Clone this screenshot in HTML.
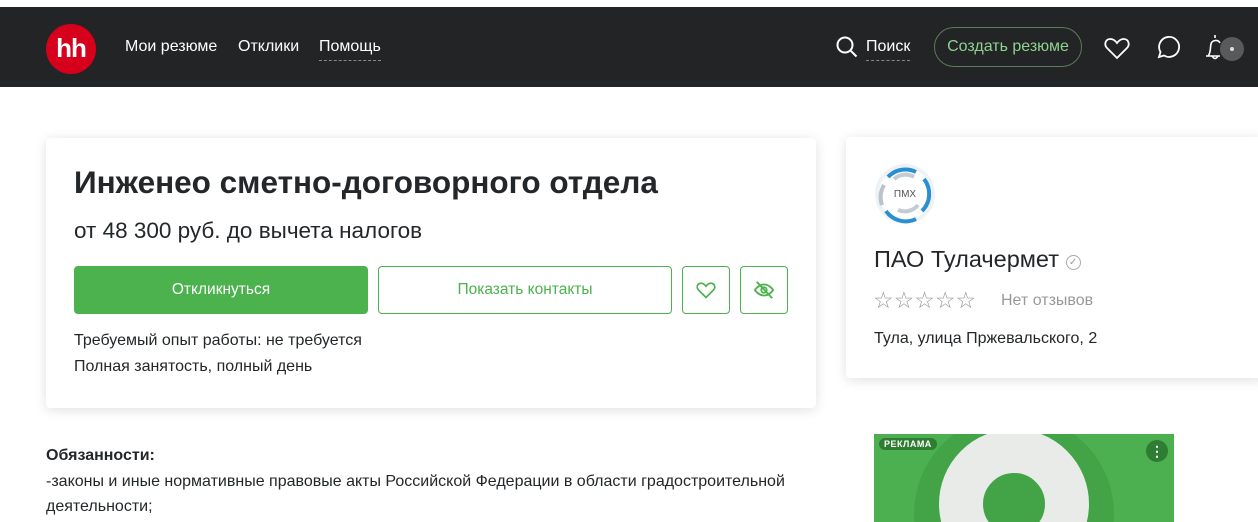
<!DOCTYPE html>
<html><head><meta charset="utf-8"><style>
*{margin:0;padding:0;box-sizing:border-box}
body{width:1258px;height:522px;overflow:hidden;background:#fff;font-family:"Liberation Sans",Arial,sans-serif;color:#232729;position:relative}
.hdr{position:absolute;left:0;top:7px;width:1258px;height:80px;background:#232425}
.abs{position:absolute}
.nav{color:#fff;font-size:16px}
.card{position:absolute;background:#fff;box-shadow:0 2px 12px rgba(0,0,0,.12);border-radius:4px}
.btn{position:absolute;border:1px solid #4bb24e;border-radius:4px;display:flex;align-items:center;justify-content:center;font-size:15.5px;color:#4bb24e;background:#fff}
.t15{font-size:16px;line-height:26px;white-space:nowrap}
</style></head><body>
<div class="hdr">
 <div class="abs" style="left:46px;top:17px;width:50px;height:50px;border-radius:50%;background:#d6001c;color:#fff;font-weight:bold;font-size:26px;text-align:center;line-height:48px;letter-spacing:-1px">hh</div>
 <div class="abs nav" style="left:125px;top:31px">Мои резюме</div>
 <div class="abs nav" style="left:238px;top:31px">Отклики</div>
 <div class="abs nav" style="left:319px;top:31px;padding-bottom:4px;border-bottom:1px dashed #888">Помощь</div>
 <svg class="abs" style="left:835px;top:28px" width="24" height="24" viewBox="0 0 24 24" fill="none" stroke="#fff" stroke-width="2"><circle cx="10" cy="10" r="7.5"/><path d="M15.5 15.5l6 6"/></svg>
 <div class="abs nav" style="left:866px;top:31px;padding-bottom:4px;border-bottom:1px dashed #888">Поиск</div>
 <div class="abs" style="left:934px;top:20px;width:148px;height:40px;border:1px solid #5c7a5e;border-radius:20px;color:#8fd28f;font-size:16px;text-align:center;line-height:38px">Создать резюме</div>
 <svg class="abs" style="left:1104px;top:29px" width="26" height="24" viewBox="0 0 26 24" fill="none" stroke="#fff" stroke-width="1.8"><path d="M13 22L3 12C0 9 1 3 6.5 3 9.5 3 11.5 5 13 7 14.5 5 16.5 3 19.5 3 25 3 26 9 23 12Z"/></svg>
 <svg class="abs" style="left:1154px;top:27px" width="26" height="26" viewBox="0 0 26 26" fill="none" stroke="#fff" stroke-width="1.8"><path d="M5 23l1.5-5A10 10 0 1 1 10 21.5Z"/></svg>
 <svg class="abs" style="left:1204px;top:25px" width="22" height="32" viewBox="0 0 22 32" fill="none" stroke="#fff" stroke-width="1.6"><path d="M11 3v3M4 24c3-3 2-8 3-12s7-5 9-1M2 24h14M8 24q3 5 6 0"/></svg>
 <div class="abs" style="left:1220px;top:30px;width:24px;height:24px;border-radius:50%;background:#5a5a5a"><div class="abs" style="left:10px;top:10px;width:4px;height:4px;border-radius:50%;background:#ddd"></div></div>
</div>

<div class="card" style="left:46px;top:138px;width:770px;height:270px">
 <div class="abs" style="left:28px;top:26px;font-size:31.5px;font-weight:bold;white-space:nowrap">Инженео сметно-договорного отдела</div>
 <div class="abs" style="left:28px;top:80px;font-size:22.5px;white-space:nowrap">от 48 300 руб. до вычета налогов</div>
 <div class="btn" style="left:28px;top:128px;width:294px;height:48px;background:#4bb24e;color:#fff">Откликнуться</div>
 <div class="btn" style="left:332px;top:128px;width:294px;height:48px">Показать контакты</div>
 <div class="btn" style="left:636px;top:128px;width:48px;height:48px"><svg width="20" height="18" viewBox="0 0 26 24" fill="none" stroke="#4bb24e" stroke-width="2.2"><path d="M13 22L3 12C0 9 1 3 6.5 3 9.5 3 11.5 5 13 7 14.5 5 16.5 3 19.5 3 25 3 26 9 23 12Z"/></svg></div>
 <div class="btn" style="left:694px;top:128px;width:48px;height:48px"><svg width="22" height="22" viewBox="0 0 24 24" fill="none" stroke="#4bb24e" stroke-width="2"><path d="M2 12s4-6 10-6 10 6 10 6-4 6-10 6S2 12 2 12Z"/><circle cx="12" cy="12" r="3"/><path d="M4 3l17 18"/></svg></div>
 <div class="abs t15" style="left:28px;top:190px">Требуемый опыт работы: не требуется</div>
 <div class="abs t15" style="left:28px;top:216px">Полная занятость, полный день</div>
</div>

<div class="abs t15" style="left:46px;top:443px;font-weight:bold">Обязанности:</div>
<div class="abs t15" style="left:46px;top:469px">-законы и иные нормативные правовые акты Российской Федерации в области градостроительной</div>
<div class="abs t15" style="left:46px;top:494px">деятельности;</div>

<div class="card" style="left:846px;top:137px;width:420px;height:241px">
 <svg class="abs" style="left:28px;top:26px" width="62" height="62" viewBox="0 0 62 62" fill="none" stroke-width="4"><circle cx="31" cy="31" r="28" stroke="#eef2f5"/><path d="M14 14A24 24 0 0 1 42 9" stroke="#2a8fd1"/><path d="M50 16A24 24 0 0 1 48 48" stroke="#2a8fd1"/><path d="M42 56A24 24 0 0 1 12 48" stroke="#2a8fd1"/><path d="M8 42A24 24 0 0 1 10 22" stroke="#b9c3c9"/><path d="M20 16A17 17 0 0 1 40 14" stroke="#c4ccd1"/><path d="M44 42A17 17 0 0 1 24 47" stroke="#c4ccd1"/><text x="31" y="34" font-size="10" fill="#555" stroke="none" text-anchor="middle" font-family="Liberation Sans">ПМХ</text></svg>
 <div class="abs" style="left:28px;top:109px;font-size:23.5px;white-space:nowrap">ПАО Тулачермет <span style="display:inline-block;width:15px;height:15px;border:1px solid #aaa;border-radius:50%;font-size:10px;color:#999;text-align:center;line-height:13px;vertical-align:2px">✓</span></div>
 <div class="abs" style="left:27px;top:150px;font-size:23px;color:#999;letter-spacing:0px">☆☆☆☆☆</div>
 <div class="abs" style="left:155px;top:155px;font-size:16px;color:#999">Нет отзывов</div>
 <div class="abs t15" style="left:28px;top:189px">Тула, улица Пржевальского, 2</div>
</div>

<div class="abs" style="left:874px;top:434px;width:300px;height:88px;background:#4caf50;overflow:hidden">
 <div class="abs" style="left:40px;top:-20px;width:200px;height:200px;border-radius:50%;background:#43a447"></div>
 <div class="abs" style="left:65px;top:-5px;width:150px;height:150px;border-radius:50%;border:44px solid #e8ebe8"></div>
 <div class="abs" style="left:5px;top:4px;background:#2e7d32;color:#fff;font-size:9px;font-weight:bold;padding:1px 5px;border-radius:8px;letter-spacing:.5px">РЕКЛАМА</div>
 <div class="abs" style="left:272px;top:6px;width:22px;height:22px;border-radius:50%;background:#2e7d32;color:#fff;text-align:center;font-size:14px;line-height:22px;font-weight:bold">⋮</div>
</div>
</body></html>
